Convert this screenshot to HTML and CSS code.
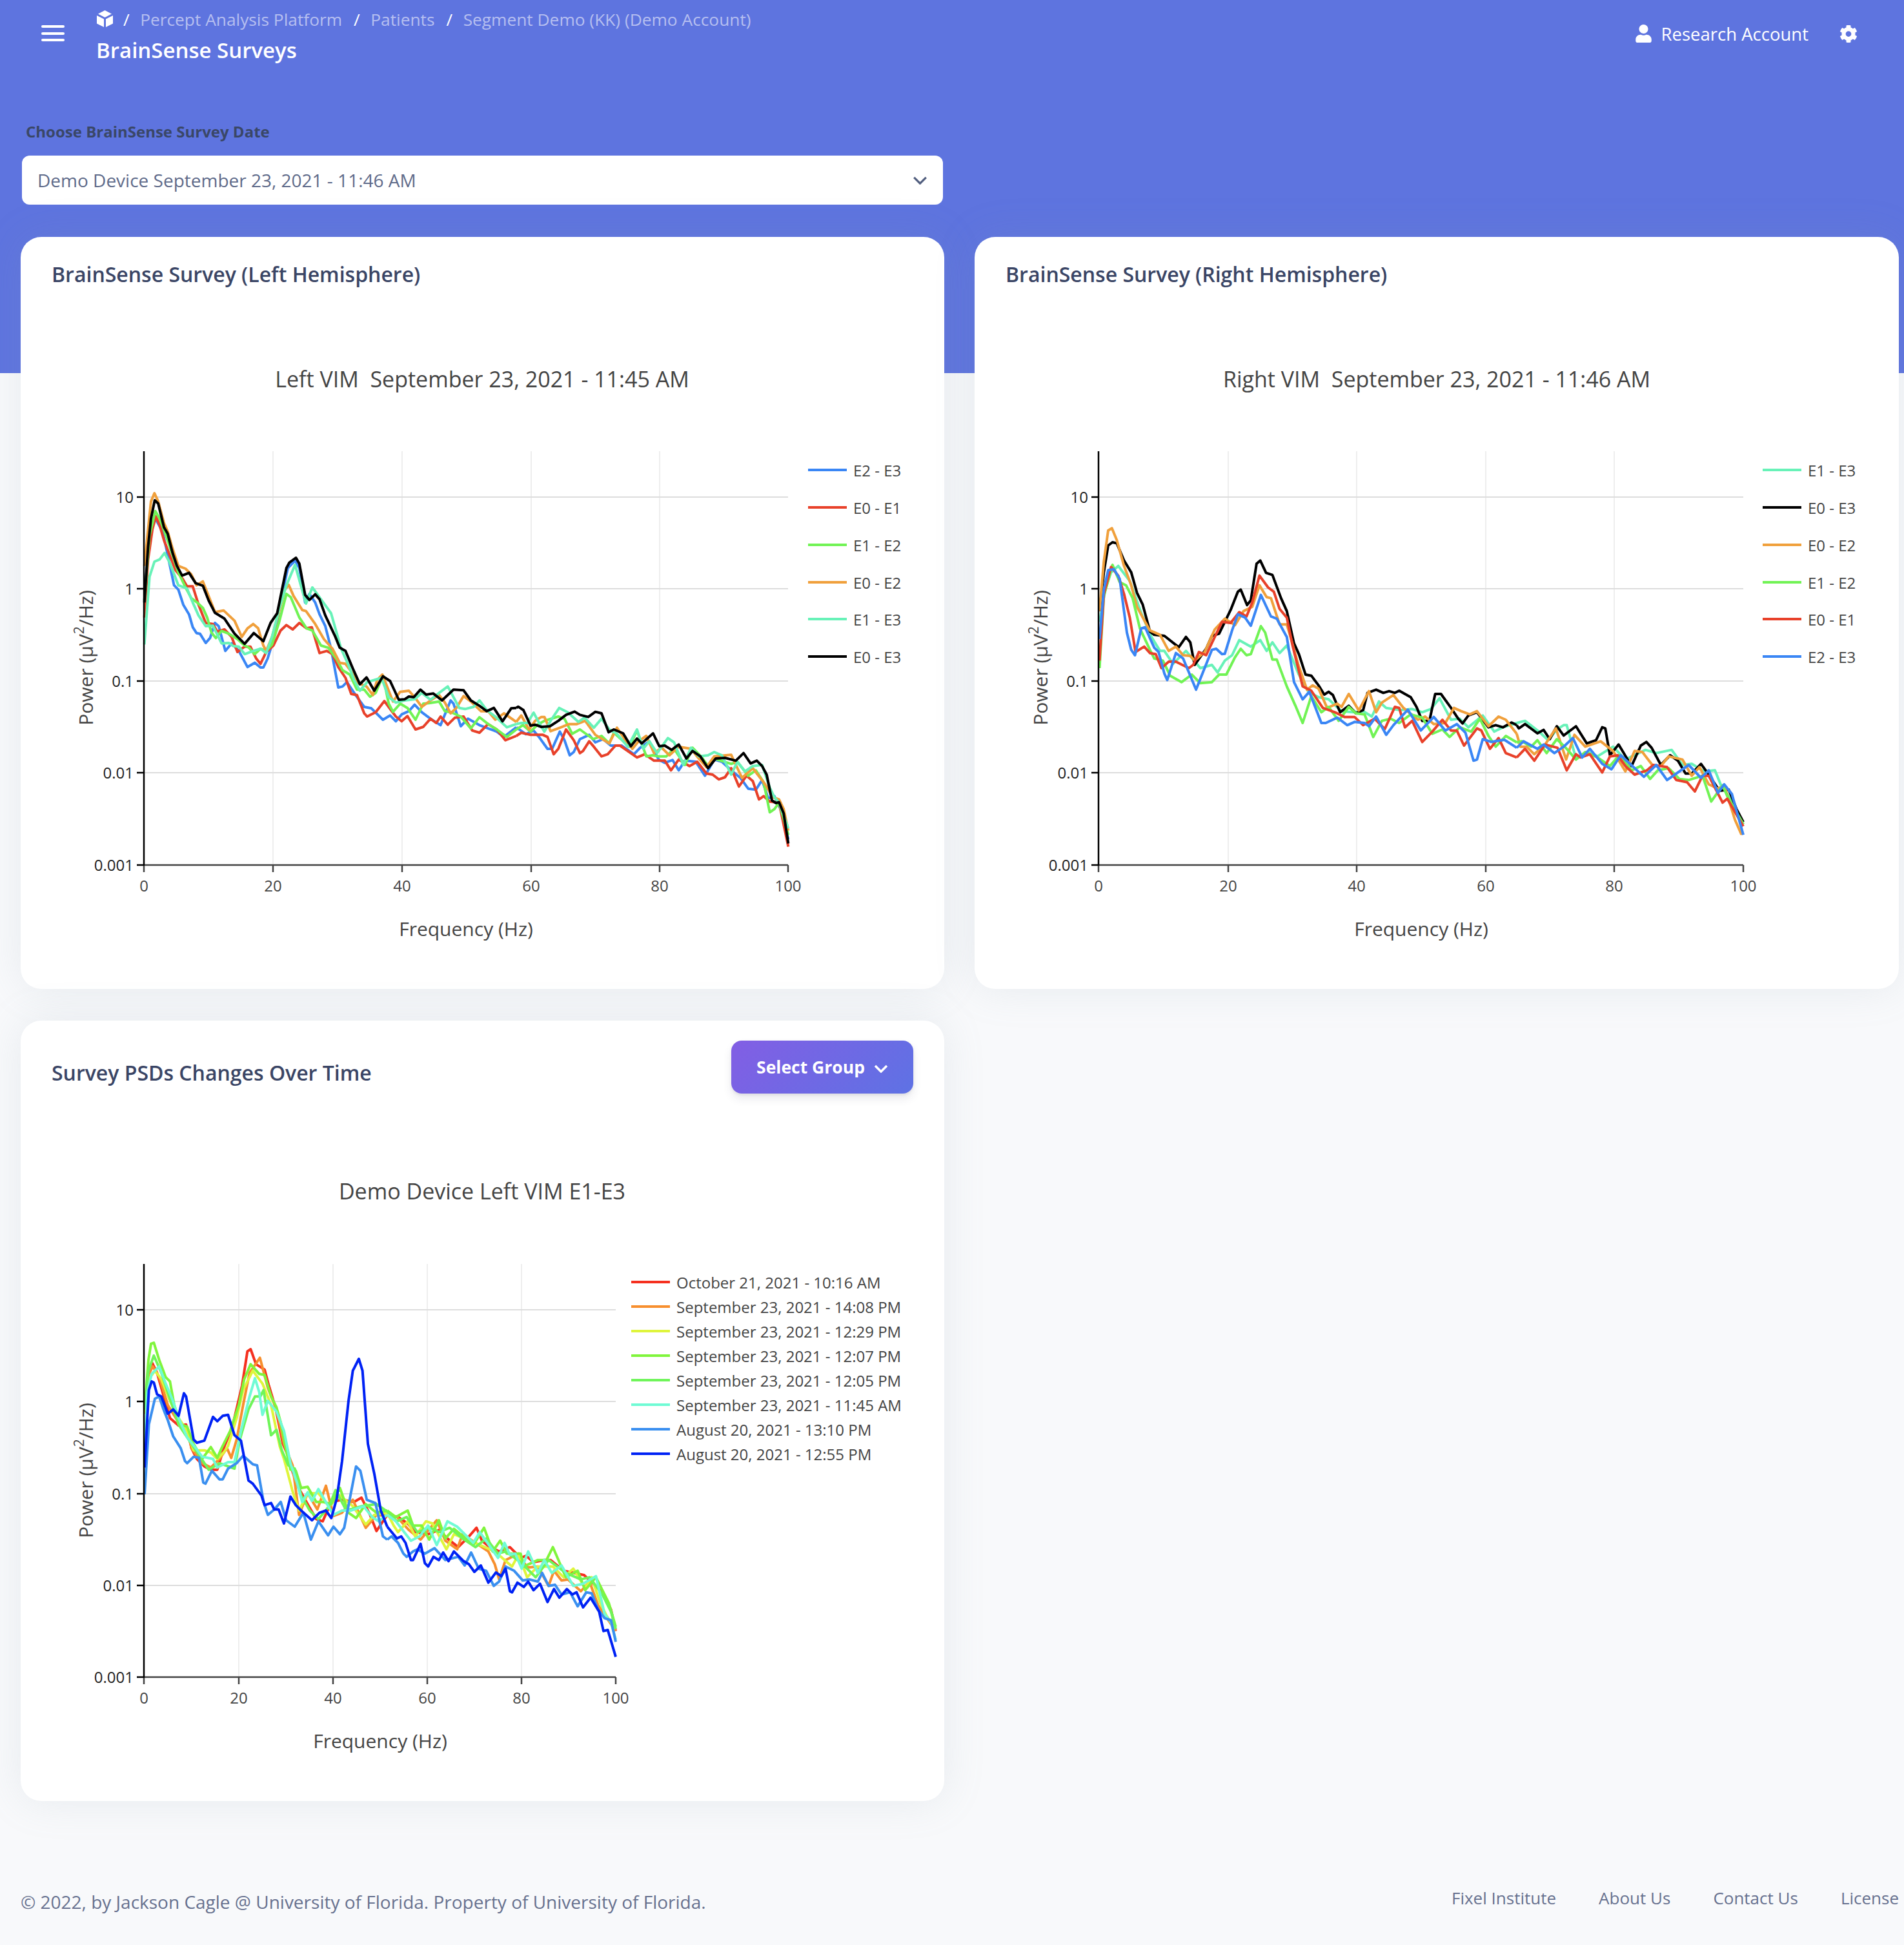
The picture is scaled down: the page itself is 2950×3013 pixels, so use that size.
FILE: index.html
```html
<!DOCTYPE html>
<html lang="en">
<head>
<meta charset="utf-8">
<title>BrainSense Surveys</title>
<link rel="stylesheet" href="styles.css">
</head>
<body>
<div class="page">
  <header class="topbar">
    <div class="menu-toggle"><span></span><span></span><span></span></div>
    <div class="heading">
      <nav class="crumbs">
        <svg class="crumb-icon" viewBox="0 0 25 26"><path d="M12.5 0l10.5 5.5-10.5 5.5L2 5.500z"/><path d="M0 8l11 5.500V26L0 20.500z"/><path d="M25 8l-11 5.500V26l11-5.500z"/></svg>
        <span class="sep">/</span><span>Percept Analysis Platform</span>
        <span class="sep">/</span><span>Patients</span>
        <span class="sep">/</span><span>Segment Demo (KK) (Demo Account)</span>
      </nav>
      <h1 class="page-title">BrainSense Surveys</h1>
    </div>
    <div class="account">
      <svg class="user-icon" viewBox="0 0 448 512"><path d="M224 256c70.700 0 128-57.300 128-128S294.700 0 224 0 96 57.300 96 128s57.300 128 128 128zm89.600 32h-16.700c-22.200 10.200-46.900 16-72.900 16s-50.600-5.800-72.900-16h-16.700C60.200 288 0 348.200 0 422.400V464c0 26.500 21.500 48 48 48h352c26.500 0 48-21.500 48-48v-41.600c0-74.200-60.200-134.400-134.400-134.400z"/></svg>
      <span>Research Account</span>
      <svg class="gear-icon" viewBox="0 0 512 512"><path d="M487.400 315.700l-42.600-24.600c4.300-23.200 4.300-47 0-70.200l42.600-24.600c4.900-2.800 7.100-8.600 5.500-14-11.100-35.600-30-67.800-54.700-94.600-3.800-4.100-10-5.100-14.800-2.300L380.800 110c-17.900-15.400-38.500-27.300-60.800-35.100V25.800c0-5.600-3.900-10.500-9.400-11.700-36.700-8.200-74.300-7.800-109.200 0-5.500 1.200-9.400 6.100-9.400 11.700V75c-22.200 7.900-42.800 19.800-60.800 35.100L88.700 85.500c-4.900-2.800-11-1.900-14.800 2.300-24.700 26.700-43.600 58.900-54.700 94.600-1.700 5.400.6 11.200 5.500 14L67.300 221c-4.300 23.200-4.300 47 0 70.200l-42.600 24.600c-4.900 2.800-7.100 8.600-5.500 14 11.100 35.600 30 67.800 54.700 94.600 3.800 4.100 10 5.100 14.800 2.300l42.600-24.600c17.900 15.400 38.500 27.300 60.800 35.100v49.200c0 5.600 3.900 10.500 9.400 11.700 36.700 8.200 74.300 7.800 109.200 0 5.500-1.200 9.400-6.100 9.400-11.700v-49.200c22.200-7.900 42.800-19.800 60.800-35.100l42.600 24.600c4.900 2.800 11 1.900 14.800-2.300 24.700-26.700 43.600-58.900 54.700-94.600 1.500-5.500-.7-11.300-5.600-14.100zM256 336c-44.100 0-80-35.900-80-80s35.900-80 80-80 80 35.900 80 80-35.900 80-80 80z"/></svg>
    </div>
  </header>

  <main class="content">
    <section class="picker">
      <label class="picker-label">Choose BrainSense Survey Date</label>
      <div class="select">
        <span>Demo Device September 23, 2021 - 11:46 AM</span>
        <svg class="select-chevron" viewBox="0 0 24 14"><path d="M2 2l10 10L22 2"/></svg>
      </div>
    </section>

    <div class="card-grid">
      <article class="card">
        <div class="card-header"><h3 class="card-title">BrainSense Survey (Left Hemisphere)</h3></div>
        <svg class="chart chart-top" viewBox="32 483 1431 1049">
          <text class="plot-title" x="747" y="587">Left VIM  September 23, 2021 - 11:45 AM</text>
          <g class="grid-v"><path d="M423 699V1340M623 699V1340M823 699V1340M1022 699V1340"/></g>
          <g class="grid-h"><path d="M223 770H1221M223 912H1221M223 1055H1221M223 1197H1221"/></g>

          <g class="traces" transform="translate(100 680) scale(.44643 .33333)">
            <polyline class="c-blue" points="277,750 295,440 315,370 340,430 355,520 380,680 395,700 412,770 432,815 445,875 458,902 470,905 490,948 505,925 522,855 535,870 558,985 580,950 605,985 635,1060 660,1040 680,1062 690,1062 705,1020 730,910 755,720 775,600 800,565 815,600 835,760 850,720 870,760 885,815 905,870 925,975 950,1155 965,1150 980,1130 1010,1190 1040,1245 1065,1252 1105,1305 1130,1285 1150,1312 1170,1280 1195,1265 1215,1235 1240,1270 1270,1300 1305,1330 1340,1215 1350,1230 1375,1335 1400,1300 1440,1330 1470,1345 1500,1360 1525,1385 1568,1340"/>
            <polyline class="c-red" points="277,830 290,560 305,420 317,360 330,400 345,470 365,540 385,610 410,650 425,685 445,685 465,770 490,855 515,860 530,895 555,885 580,920 600,990 625,965 645,965 665,1020 680,1045 700,990 725,960 750,890 770,865 792,885 815,855 840,880 858,875 885,995 910,985 930,1000 950,1060 975,1110 995,1185 1015,1190 1040,1275 1050,1290 1080,1270 1110,1218 1130,1255 1150,1290 1170,1312 1190,1288 1218,1350 1245,1338 1270,1300 1290,1320 1305,1290 1330,1328 1355,1295 1385,1290 1415,1355 1440,1365 1470,1325 1500,1350 1530,1400 1568,1380"/>
            <polyline class="c-green" points="277,750 295,450 315,335 330,370 350,440 370,520 395,620 420,690 440,740 460,760 480,785 495,830 510,900 525,925 545,892 570,905 600,930 625,960 640,970 660,1000 680,975 700,985 720,955 745,850 770,720 785,735 815,830 840,880 860,890 890,960 915,970 945,1025 965,1075 990,1095 1015,1165 1040,1165 1060,1198 1080,1180 1105,1100 1125,1230 1140,1268 1165,1230 1190,1250 1218,1305 1245,1230 1265,1228 1300,1220 1320,1265 1345,1272 1375,1290 1410,1345 1440,1293 1470,1325 1500,1350 1535,1385 1568,1350"/>
            <polyline class="c-orange" points="277,590 290,420 300,290 312,252 325,290 345,390 358,430 375,510 395,590 420,603 440,630 458,680 480,662 500,730 522,805 552,797 590,845 615,920 635,880 655,860 672,880 690,960 700,985 720,920 745,800 765,700 778,678 795,730 825,795 838,800 870,860 900,930 930,975 955,1040 975,1045 1000,1090 1020,1135 1048,1150 1070,1190 1085,1120 1103,1095 1125,1170 1140,1220 1165,1175 1195,1170 1215,1200 1240,1245 1270,1215 1300,1190 1320,1225 1340,1275 1360,1250 1385,1195 1410,1220 1445,1265 1470,1265 1495,1305 1525,1275 1568,1315"/>
            <polyline class="c-mint" points="277,955 295,640 312,570 330,560 347,530 365,575 395,680 425,695 445,760 465,820 490,870 515,868 545,950 570,948 585,962 605,965 625,1000 655,985 680,975 700,995 720,920 745,790 770,680 800,585 820,680 838,765 860,690 890,745 925,810 960,975 985,1050 1005,1120 1025,1170 1050,1130 1075,1120 1100,1110 1125,1200 1150,1225 1180,1215 1215,1210 1240,1180 1270,1212 1300,1180 1330,1150 1370,1250 1390,1255 1420,1245 1440,1215 1465,1260 1495,1290 1535,1340 1568,1325"/>
            <polyline class="c-black" points="277,760 290,500 300,370 313,285 325,300 345,410 358,440 375,530 390,590 408,635 432,622 455,670 480,682 500,750 522,808 555,835 590,905 625,952 657,902 690,940 715,855 738,810 770,600 780,575 803,552 815,580 835,725 850,748 870,722 885,745 905,820 940,920 955,970 975,985 1000,1065 1025,1140 1048,1108 1075,1170 1105,1103 1130,1125 1160,1212 1180,1210 1195,1197 1212,1200 1235,1165 1255,1188 1280,1183 1310,1215 1350,1165 1385,1168 1410,1215 1440,1240 1465,1265 1490,1250 1520,1312 1550,1252 1568,1250"/>
          </g>
          <g class="traces" transform="translate(700 900) scale(.47832 .33333)">
            <polyline class="c-blue" points="209,680 240,712 265,695 285,730 310,780 325,780 350,700 365,740 382,810 395,795 415,735 445,715 465,750 490,735 515,765 550,765 590,805 610,775 640,745 670,830 690,845 715,832 735,880 755,835 790,840 820,905 850,830 875,840 905,880 935,915 960,965 985,970 1005,925 1025,1010 1045,1000 1065,1060 1090,1200"/>
            <polyline class="c-red" points="209,720 225,705 255,715 295,715 310,725 330,805 345,780 370,690 395,740 415,800 425,790 445,745 460,770 485,815 505,805 530,765 545,765 600,820 625,805 655,835 690,835 710,880 735,830 770,860 795,840 825,895 845,900 865,922 885,912 905,870 930,955 955,905 975,930 995,1015 1010,1000 1030,1025 1060,1030 1090,1235"/>
            <polyline class="c-green" points="209,690 230,670 255,700 280,665 300,650 345,630 365,640 390,710 415,690 458,735 485,720 510,755 525,705 575,770 600,695 630,815 650,810 670,815 695,815 720,780 755,855 780,775 810,820 830,860 850,825 905,850 925,840 960,905 985,880 1010,935 1030,1075 1045,1060 1060,1030 1090,1180"/>
            <polyline class="c-orange" points="209,655 225,625 250,690 270,650 290,632 300,632 320,698 350,682 380,665 405,665 432,650 465,715 510,755 535,682 560,735 585,780 605,745 630,720 655,800 680,775 705,810 735,770 775,780 800,825 825,865 850,815 905,808 940,915 975,870 1015,945 1040,1005 1060,1015 1075,1060 1090,1160"/>
            <polyline class="c-mint" points="209,665 225,660 245,660 265,612 285,665 300,700 320,650 348,590 375,610 410,655 430,635 460,682 485,640 510,690 535,710 570,770 600,690 620,780 640,745 665,800 700,730 720,750 750,855 775,775 800,815 830,810 850,795 875,810 905,900 925,840 950,885 975,860 1005,855 1030,960 1045,1005 1060,1030 1090,1150"/>
            <polyline class="c-black" points="209,590 215,584 232,600 255,672 270,668 290,678 318,675 345,650 370,622 398,607 415,622 442,632 465,608 485,615 508,703 525,690 555,708 580,768 600,732 615,755 652,708 672,768 690,765 712,785 735,760 760,825 780,790 805,815 830,870 855,825 885,822 920,835 945,800 968,848 988,835 1005,860 1020,900 1037,1020 1050,1032 1060,1028 1075,1080 1090,1220"/>
          </g>

          <g class="axis-x"><path d="M222 1340H1221M223 1340V1351M423 1340V1351M623 1340V1351M823 1340V1351M1022 1340V1351M1221 1340V1351"/></g>
          <g class="axis-y"><path d="M223 699V1341M212 770H223M212 912H223M212 1055H223M212 1197H223M212 1340H223"/></g>
          <g class="tick-y">
            <text x="207" y="770">10</text><text x="207" y="912">1</text><text x="207" y="1055">0.1</text><text x="207" y="1197">0.01</text><text x="207" y="1340">0.001</text>
          </g>
          <g class="tick-x">
            <text x="223" y="1373">0</text><text x="423" y="1373">20</text><text x="623" y="1373">40</text><text x="823" y="1373">60</text><text x="1022" y="1373">80</text><text x="1221" y="1373">100</text>
          </g>
          <text class="axis-title" x="722" y="1438">Frequency (Hz)</text>
          <text class="axis-title" transform="translate(132 1019) rotate(-90)">Power (µV<tspan class="sup" dy="-10">2</tspan><tspan dy="10">/Hz)</tspan></text>
          <g class="legend-lines">
            <path class="c-blue" d="M1252 728H1312"/><path class="c-red" d="M1252 786H1312"/><path class="c-green" d="M1252 844H1312"/><path class="c-orange" d="M1252 902H1312"/><path class="c-mint" d="M1252 959H1312"/><path class="c-black" d="M1252 1017H1312"/>
          </g>
          <g class="legend-text">
            <text x="1322" y="728">E2 - E3</text><text x="1322" y="786">E0 - E1</text><text x="1322" y="844">E1 - E2</text><text x="1322" y="902">E0 - E2</text><text x="1322" y="959">E1 - E3</text><text x="1322" y="1017">E0 - E3</text>
          </g>
        </svg>
      </article>

      <article class="card">
        <div class="card-header"><h3 class="card-title">BrainSense Survey (Right Hemisphere)</h3></div>
        <svg class="chart chart-top" viewBox="1510 483 1432 1049">
          <text class="plot-title" x="2226" y="587">Right VIM  September 23, 2021 - 11:46 AM</text>
          <g class="grid-v"><path d="M1903 699V1340M2102 699V1340M2302 699V1340M2501 699V1340"/></g>
          <g class="grid-h"><path d="M1702 770H2701M1702 912H2701M1702 1055H2701M1702 1197H2701"/></g>

          <g class="traces" transform="translate(1650 680) scale(.44643 .33333)">
            <polyline class="c-mint" points="120,850 140,700 160,620 185,590 225,660 265,810 300,920 330,985 345,985 375,1045 420,985 470,1065 510,1050 530,1085 555,1030 580,1005 605,935 645,965 678,935 700,985 720,945 745,995 770,960 810,1090 845,1175 880,1200 915,1210 960,1265 1000,1270 1035,1265 1065,1290 1090,1220 1115,1250 1165,1260 1205,1255 1240,1270 1270,1255 1300,1205 1340,1305 1370,1300 1400,1340 1450,1285 1490,1360 1520,1340 1568,1320"/>
            <polyline class="c-black" points="120,800 135,620 150,495 165,480 180,485 205,565 230,620 250,715 270,770 295,895 310,910 345,915 395,968 420,920 435,945 450,1050 490,975 510,915 535,905 575,795 600,710 610,700 632,772 645,750 665,580 678,565 698,622 720,632 750,740 770,800 795,950 812,1000 835,1095 855,1100 880,1145 900,1188 915,1175 930,1190 955,1270 985,1240 1010,1275 1035,1260 1050,1180 1080,1165 1105,1180 1125,1172 1145,1180 1160,1170 1200,1200 1220,1245 1240,1310 1265,1310 1285,1185 1305,1185 1340,1250 1365,1300 1380,1322 1400,1285 1430,1270 1470,1340 1495,1330 1520,1340 1550,1318 1568,1330"/>
            <polyline class="c-orange" points="120,800 135,570 150,425 163,415 180,470 205,590 230,680 250,780 270,830 295,890 330,910 360,985 385,965 410,1005 435,1008 450,1030 485,990 520,885 555,835 590,865 620,800 650,780 675,680 700,735 715,740 745,862 770,862 785,930 810,1050 840,1165 860,1145 880,1160 910,1250 945,1230 960,1245 985,1185 1020,1262 1055,1172 1080,1270 1100,1225 1140,1190 1175,1250 1225,1305 1250,1290 1280,1325 1320,1320 1350,1250 1375,1265 1405,1280 1430,1265 1470,1335 1505,1290 1530,1305 1568,1370"/>
            <polyline class="c-green" points="120,1065 135,730 165,585 190,665 212,680 235,740 260,880 295,980 310,1020 340,1030 365,1100 405,1130 440,1095 470,1135 510,1130 535,1095 560,1095 590,1015 610,975 630,1005 645,1000 680,870 695,900 720,1025 735,1025 770,1150 800,1240 825,1320 855,1195 890,1270 915,1245 950,1310 985,1245 1010,1275 1040,1280 1070,1385 1100,1310 1130,1300 1160,1320 1200,1280 1240,1295 1275,1370 1310,1350 1335,1385 1370,1340 1410,1360 1440,1300 1470,1380 1495,1430 1530,1380 1568,1410"/>
            <polyline class="c-red" points="120,1030 135,720 160,595 185,635 205,720 225,830 245,990 275,965 295,995 315,1000 335,1065 360,1035 385,1035 430,1065 445,1050 465,990 490,1005 520,920 545,850 575,855 605,805 630,825 650,760 675,635 705,690 725,710 745,790 770,830 790,960 825,1150 855,1170 895,1250 940,1272 970,1292 1005,1292 1035,1330 1075,1300 1110,1348 1145,1245 1160,1250 1180,1340 1205,1310 1240,1408 1275,1360 1310,1305 1340,1355 1360,1355 1385,1425 1430,1345 1445,1355 1475,1440 1505,1390 1530,1460 1568,1480"/>
            <polyline class="c-blue" points="120,930 135,700 150,610 170,605 190,650 215,900 230,980 243,1005 265,880 278,875 310,970 325,990 345,1090 355,1120 385,995 410,1020 455,1165 510,980 525,975 545,1000 555,998 580,890 600,815 625,830 645,868 680,725 715,825 735,835 770,920 795,1130 825,1210 848,1175 890,1320 905,1320 945,1295 980,1330 1005,1315 1040,1320 1055,1335 1080,1290 1115,1375 1140,1330 1190,1258 1235,1355 1280,1292 1320,1355 1360,1325 1390,1365 1418,1495 1430,1490 1450,1395 1480,1408 1525,1398 1568,1435"/>
          </g>
          <g class="traces" transform="translate(2150 900) scale(.47832 .33333)">
            <polyline class="c-mint" points="418,660 445,650 490,700 520,740 548,690 570,670 580,670 610,825 650,795 680,815 730,770 770,830 835,785 870,800 920,785 955,855 985,850 1025,885 1060,880 1080,950 1100,990 1152,1130"/>
            <polyline class="c-black" points="418,670 425,685 445,665 485,708 505,692 525,735 548,675 570,718 610,675 645,755 675,740 695,680 705,685 720,810 748,760 790,860 820,765 838,748 855,775 885,855 915,810 940,835 965,895 985,895 1015,850 1040,900 1075,975 1105,970 1130,1060 1152,1120"/>
            <polyline class="c-orange" points="418,710 430,770 450,770 475,805 510,760 545,685 578,830 605,715 640,770 690,745 730,790 770,885 800,790 825,795 860,860 885,860 910,815 955,830 985,905 1010,865 1040,945 1070,965 1090,950 1125,1110 1145,1175 1152,1170"/>
            <polyline class="c-green" points="418,750 435,745 465,770 485,740 515,800 548,735 580,780 610,830 640,795 680,820 720,860 750,810 790,880 820,860 850,920 875,880 910,870 945,920 975,925 1020,905 1048,1025 1085,950 1100,1000 1152,1130"/>
            <polyline class="c-red" points="418,820 445,780 475,835 510,760 550,775 580,880 610,805 625,820 655,805 695,890 720,815 745,810 770,860 800,900 840,880 860,855 905,865 935,925 970,935 995,978 1020,905 1040,905 1085,1030 1100,1012 1152,1140"/>
            <polyline class="c-blue" points="418,775 440,745 485,780 505,760 540,800 570,770 600,730 630,820 655,780 695,850 725,875 755,810 785,850 830,910 870,855 905,925 975,855 1015,915 1040,880 1070,985 1090,945 1115,990 1152,1180"/>
          </g>

          <g class="axis-x"><path d="M1701 1340H2701M1702 1340V1351M1903 1340V1351M2102 1340V1351M2302 1340V1351M2501 1340V1351M2701 1340V1351"/></g>
          <g class="axis-y"><path d="M1702 699V1341M1691 770H1702M1691 912H1702M1691 1055H1702M1691 1197H1702M1691 1340H1702"/></g>
          <g class="tick-y">
            <text x="1686" y="770">10</text><text x="1686" y="912">1</text><text x="1686" y="1055">0.1</text><text x="1686" y="1197">0.01</text><text x="1686" y="1340">0.001</text>
          </g>
          <g class="tick-x">
            <text x="1702" y="1373">0</text><text x="1903" y="1373">20</text><text x="2102" y="1373">40</text><text x="2302" y="1373">60</text><text x="2501" y="1373">80</text><text x="2701" y="1373">100</text>
          </g>
          <text class="axis-title" x="2202" y="1438">Frequency (Hz)</text>
          <text class="axis-title" transform="translate(1611 1019) rotate(-90)">Power (µV<tspan class="sup" dy="-10">2</tspan><tspan dy="10">/Hz)</tspan></text>
          <g class="legend-lines">
            <path class="c-mint" d="M2731 728H2791"/><path class="c-black" d="M2731 786H2791"/><path class="c-orange" d="M2731 844H2791"/><path class="c-green" d="M2731 902H2791"/><path class="c-red" d="M2731 959H2791"/><path class="c-blue" d="M2731 1017H2791"/>
          </g>
          <g class="legend-text">
            <text x="2801" y="728">E1 - E3</text><text x="2801" y="786">E0 - E3</text><text x="2801" y="844">E0 - E2</text><text x="2801" y="902">E1 - E2</text><text x="2801" y="959">E0 - E1</text><text x="2801" y="1017">E2 - E3</text>
          </g>
        </svg>
      </article>

      <article class="card">
        <div class="card-header card-header-action">
          <h3 class="card-title card-title-low">Survey PSDs Changes Over Time</h3>
          <button class="group-button">Select Group
            <svg class="button-chevron" viewBox="0 0 22 13"><path d="M2 2l9 9 9-9"/></svg>
          </button>
        </div>
        <svg class="chart chart-bottom" viewBox="32 1725 1431 1065">
          <text class="plot-title" x="747" y="1845">Demo Device Left VIM E1-E3</text>
          <g class="grid-v"><path d="M370 1958V2598M516 1958V2598M662 1958V2598M808 1958V2598"/></g>
          <g class="grid-h"><path d="M223 2029H954M223 2171H954M223 2314H954M223 2456H954"/></g>

          <g class="traces" transform="translate(100 1950) scale(.33333)">
            <polyline class="h-red" points="372,720 390,530 408,485 430,530 450,600 490,740 530,775 565,770 590,880 615,930 650,965 680,980 710,980 740,880 780,780 825,590 850,430 865,420 890,490 930,515 950,590 980,690 1015,860 1045,930 1060,990 1085,1060 1130,1140 1170,1210 1200,1220 1240,1130 1290,1120 1345,1130 1380,1110 1420,1190 1450,1265 1500,1190"/>
            <polyline class="h-orange" points="372,700 390,540 410,500 440,550 480,680 530,760 570,790 590,880 640,950 680,970 720,930 755,880 775,925 800,840 830,680 860,530 908,460 945,600 985,700 1020,860 1060,960 1090,1190 1130,1090 1175,1165 1215,1055 1250,1195 1290,1180 1340,1120 1400,1250 1450,1190 1500,1195"/>
            <polyline class="h-yellow" points="372,720 392,560 420,520 450,560 490,660 530,740 570,800 600,890 650,890 680,900 710,930 740,900 760,870 800,740 830,610 875,520 920,580 960,680 1000,870 1020,930 1060,1080 1090,1170 1130,1090 1180,1090 1230,1150 1280,1100 1340,1150 1400,1235 1440,1190 1500,1180"/>
            <polyline class="h-lime" points="372,700 390,470 402,395 415,390 440,470 470,550 490,570 510,680 540,770 570,780 600,860 640,930 680,875 710,925 730,880 770,800 810,680 835,560 865,490 905,535 930,540 960,640 985,690 1005,760 1030,890 1050,980 1075,985 1100,1065 1130,1060 1170,1130 1200,1130 1240,1140 1280,1065 1320,1180 1355,1205 1400,1140 1450,1180 1500,1170"/>
            <polyline class="h-green" points="372,700 390,520 415,450 450,530 490,650 530,770 570,830 610,890 670,980 720,950 790,975 815,840 855,700 885,640 910,640 925,610 960,820 985,795 1010,890 1040,960 1070,975 1100,1100 1140,1170 1180,1210 1230,1150 1260,1075 1310,1170 1380,1150 1450,1140 1500,1175"/>
            <polyline class="h-mint" points="372,900 385,620 405,535 440,500 470,580 500,650 530,740 570,830 610,880 640,920 690,930 710,970 760,945 790,945 820,800 860,640 885,555 905,620 920,725 945,660 985,710 1020,800 1050,950 1080,1040 1105,1130 1130,1085 1150,1125 1180,1070 1220,1140 1250,1190 1290,1170 1330,1170 1390,1150 1430,1200 1460,1220 1500,1190"/>
            <polyline class="h-blue" points="372,1095 392,770 420,650 440,640 460,700 480,750 505,825 540,880 560,940 570,950 600,920 625,925 645,1040 655,1045 685,985 720,1025 735,1025 760,975 800,950 830,915 875,955 895,960 925,1130 945,1190 975,1165 1005,1130 1030,1215 1070,1245 1110,1180 1145,1305 1180,1220 1225,1285 1250,1245 1280,1280 1300,1250 1355,965 1375,985 1405,1120 1445,1135 1480,1290 1500,1305"/>
            <polyline class="h-navy" points="372,970 392,610 405,570 415,575 430,630 450,640 480,720 505,700 530,730 555,625 565,640 600,840 615,855 650,845 690,735 710,755 735,730 760,725 790,820 820,845 855,1030 875,1045 915,1100 930,1145 960,1135 975,1165 995,1165 1020,1230 1050,1105 1075,1145 1100,1170 1150,1215 1185,1180 1215,1170 1240,1205 1265,1115 1290,940 1320,660 1340,520 1368,465 1385,520 1410,860 1440,1000 1470,1170 1500,1245"/>
          </g>
          <g class="traces" transform="translate(500 2150) scale(.33333)">
            <polyline class="h-red" points="300,590 350,600 395,630 430,670 490,680 540,660 580,700 630,740 680,690 715,650 740,710 770,735 820,760 870,740 920,790 945,780 980,810 1030,800 1060,800 1120,850 1215,870 1300,950 1340,1030 1362,1130"/>
            <polyline class="h-orange" points="300,595 345,600 400,660 455,705 530,615 570,710 625,750 650,680 770,760 800,820 820,890 850,800 910,770 950,835 1000,830 1050,920 1075,850 1110,895 1140,890 1200,945 1240,900 1280,1010 1362,1130"/>
            <polyline class="h-yellow" points="300,580 330,640 350,670 395,620 430,690 480,620 510,630 575,750 610,680 660,700 730,730 800,760 880,830 910,775 950,880 1000,830 1070,830 1120,880 1165,840 1220,930 1250,880 1290,1000 1320,1060 1362,1120"/>
            <polyline class="h-lime" points="300,570 340,600 395,570 420,640 460,640 495,705 540,615 570,700 610,655 700,730 750,650 790,760 825,710 855,770 920,770 935,830 1000,800 1040,800 1070,740 1100,810 1130,880 1185,850 1220,940 1270,880 1330,1000 1362,1110"/>
            <polyline class="h-green" points="300,575 345,620 390,600 440,670 500,650 540,670 590,650 650,700 710,740 760,700 815,770 850,760 920,810 990,880 1050,800 1130,860 1200,890 1240,880 1300,960 1340,1040 1362,1120"/>
            <polyline class="h-mint" points="300,590 340,620 410,710 450,690 490,640 530,730 580,620 625,645 700,720 730,670 815,790 845,720 870,775 895,770 925,840 955,760 1000,860 1030,800 1065,860 1110,825 1165,920 1210,910 1270,875 1310,1050 1340,1090 1362,1170"/>
            <polyline class="h-blue" points="300,705 320,690 350,720 375,770 390,785 420,760 440,750 475,770 520,745 570,800 630,785 660,825 690,765 725,840 760,850 795,920 820,900 850,830 890,850 930,895 960,890 1000,900 1020,860 1050,920 1080,915 1110,960 1150,950 1185,1015 1225,950 1250,955 1280,1030 1310,1070 1340,1080 1362,1180"/>
            <polyline class="h-navy" points="300,645 345,700 365,690 385,720 410,800 420,800 455,725 475,815 490,830 515,785 540,800 560,765 585,805 610,760 655,805 680,820 705,855 735,825 770,905 805,858 830,875 850,840 870,945 880,950 905,905 935,925 955,900 980,940 1010,910 1045,995 1075,935 1100,975 1135,935 1160,960 1180,950 1210,1020 1245,975 1285,1040 1305,1130 1325,1125 1362,1250"/>
          </g>

          <g class="axis-x"><path d="M222 2598H954M223 2598V2609M370 2598V2609M516 2598V2609M662 2598V2609M808 2598V2609M954 2598V2609"/></g>
          <g class="axis-y"><path d="M223 1958V2599M212 2029H223M212 2171H223M212 2314H223M212 2456H223M212 2598H223"/></g>
          <g class="tick-y">
            <text x="207" y="2029">10</text><text x="207" y="2171">1</text><text x="207" y="2314">0.1</text><text x="207" y="2456">0.01</text><text x="207" y="2598">0.001</text>
          </g>
          <g class="tick-x">
            <text x="223" y="2631">0</text><text x="370" y="2631">20</text><text x="516" y="2631">40</text><text x="662" y="2631">60</text><text x="808" y="2631">80</text><text x="954" y="2631">100</text>
          </g>
          <text class="axis-title" x="589" y="2696">Frequency (Hz)</text>
          <text class="axis-title" transform="translate(132 2278) rotate(-90)">Power (µV<tspan class="sup" dy="-10">2</tspan><tspan dy="10">/Hz)</tspan></text>
          <g class="legend-lines">
            <path class="h-red" d="M978 1986H1038"/><path class="h-orange" d="M978 2024H1038"/><path class="h-yellow" d="M978 2062H1038"/><path class="h-lime" d="M978 2100H1038"/><path class="h-green" d="M978 2138H1038"/><path class="h-mint" d="M978 2176H1038"/><path class="h-blue" d="M978 2214H1038"/><path class="h-navy" d="M978 2252H1038"/>
          </g>
          <g class="legend-text">
            <text x="1048" y="1986">October 21, 2021 - 10:16 AM</text><text x="1048" y="2024">September 23, 2021 - 14:08 PM</text><text x="1048" y="2062">September 23, 2021 - 12:29 PM</text><text x="1048" y="2100">September 23, 2021 - 12:07 PM</text><text x="1048" y="2138">September 23, 2021 - 12:05 PM</text><text x="1048" y="2176">September 23, 2021 - 11:45 AM</text><text x="1048" y="2214">August 20, 2021 - 13:10 PM</text><text x="1048" y="2252">August 20, 2021 - 12:55 PM</text>
          </g>
        </svg>
      </article>
    </div>
  </main>

  <footer class="footer">
    <p class="copyright">© 2022, by Jackson Cagle @ University of Florida. Property of University of Florida.</p>
    <nav class="footer-links">
      <a>Fixel Institute</a><a>About Us</a><a>Contact Us</a><a>License</a>
    </nav>
  </footer>
</div>
</body>
</html>
```

FILE: styles.css
```css
* { box-sizing: border-box; }
html, body { margin: 0; padding: 0; }
body {
  font-family: "Open Sans", sans-serif;
  color: #5f6b8a;
  background: #f8f9fb;
}
.page {
  width: 2950px;
  height: 3013px;
  overflow: hidden;
  background: linear-gradient(#5e74df 578px, #f8f9fb 578px);
}

/* top bar */
.topbar {
  display: flex;
  align-items: flex-start;
  height: 164px;
  padding: 10px 72px 0 64px;
}
.menu-toggle {
  display: flex;
  flex-direction: column;
  gap: 6.500px;
  width: 36px;
  margin-top: 29px;
  margin-right: 50px;
}
.menu-toggle span {
  display: block;
  height: 4px;
  border-radius: 2px;
  background: #fff;
}
.heading { flex: 1; }
.crumbs {
  display: flex;
  align-items: center;
  height: 40px;
  font-size: 26.300px;
  color: #b6bff0;
}
.crumb-icon { width: 25px; height: 26px; fill: #fff; margin-right: 16px; margin-top: -2px; }
.sep { color: #fff; margin-right: 16.500px; }
.crumbs span:not(.sep) { margin-right: 18px; }
.page-title {
  margin: 6px 0 0 -1px;
  font-size: 33px;
  line-height: 44px;
  font-weight: 600;
  color: #fff;
}
.account {
  display: flex;
  align-items: center;
  height: 56px;
  margin-top: 14px;
  font-size: 27.500px;
  color: #fff;
}
.user-icon { width: 25px; height: 28px; fill: #fff; margin-right: 15px; }
.gear-icon { width: 28px; height: 29px; fill: #fff; margin-left: 48px; }

/* date picker */
.content { padding: 0 8px 0 32px; }
.picker { width: 1431px; margin-bottom: 50px; }
.picker-label {
  display: block;
  padding-left: 8px;
  height: 77px;
  font-size: 24px;
  line-height: 80px;
  font-weight: 700;
  color: #3a4767;
}
.select {
  display: flex;
  align-items: center;
  justify-content: space-between;
  height: 76px;
  margin: 0 2px;
  padding: 0 24px;
  border-radius: 12px;
  background: #fff;
  font-size: 28px;
}
.select-chevron { width: 23px; height: 13px; fill: none; stroke: #525f7f; stroke-width: 3.500; }

/* cards */
.card-grid {
  display: grid;
  grid-template-columns: 1431px 1432px;
  column-gap: 47px;
  row-gap: 49px;
}
.card {
  border-radius: 32px;
  background: #fff;
  box-shadow: 0 0 64px rgba(136, 152, 170, .15);
}
.card-header { display: flex; align-items: center; justify-content: space-between; padding: 40px 48px; }
.card-header-action { padding: 31px 48px; }
.card-title {
  margin: 0;
  font-size: 32px;
  line-height: 36px;
  font-weight: 600;
  color: #3a4565;
}
.card-title-low { padding-top: 18px; line-height: 36px; }
.group-button {
  display: flex;
  align-items: center;
  justify-content: center;
  gap: 14px;
  width: 282px;
  height: 82px;
  border: 0;
  border-radius: 16px;
  background: linear-gradient(135deg, #825ee4, #5e72e4);
  box-shadow: 0 8px 14px rgba(50, 50, 93, .1), 0 2px 4px rgba(0, 0, 0, .08);
  font-family: inherit;
  font-size: 26.500px;
  font-weight: 700;
  color: #fff;
}
.button-chevron { width: 22px; height: 13px; margin-top: 4px; fill: none; stroke: #fff; stroke-width: 3.500; }

/* plotly-like charts */
.chart { display: block; width: 100%; font-family: "Open Sans", sans-serif; }
.chart-top { height: 1049px; }
.chart-bottom { height: 1065px; }
.plot-title { font-size: 34px; fill: #444; text-anchor: middle; dominant-baseline: central; white-space: pre; }
.grid-v path { stroke: #eee; stroke-width: 2; fill: none; }
.grid-h path { stroke: #ddd; stroke-width: 2; fill: none; }
.axis-x path { stroke: #444; stroke-width: 2.500; fill: none; }
.axis-y path { stroke: #000; stroke-width: 2.500; fill: none; }
.tick-x text { font-size: 24px; fill: #444; text-anchor: middle; dominant-baseline: central; transform: translateY(-2px); }
.tick-y text { font-size: 24px; fill: #222; text-anchor: end; dominant-baseline: central; transform: translateY(-1px); }
.axis-title { font-size: 30px; fill: #444; text-anchor: middle; dominant-baseline: central; }
.sup { font-size: 21px; }
.legend-text text { font-size: 24px; fill: #444; dominant-baseline: central; }
.legend-lines path { fill: none; stroke-width: 4; }
.traces polyline {
  fill: none;
  stroke-width: 4;
  stroke-linejoin: round;
  vector-effect: non-scaling-stroke;
}
.c-blue { stroke: #3a86f5; }
.c-red { stroke: #e8412a; }
.c-green { stroke: #71f355; }
.c-orange { stroke: #f0a03c; }
.c-mint { stroke: #68f2b8; }
.c-black { stroke: #000; }
.h-red { stroke: #f5301f; }
.h-orange { stroke: #f78f2e; }
.h-yellow { stroke: #dff53c; }
.h-lime { stroke: #80f53c; }
.h-green { stroke: #6ff55a; }
.h-mint { stroke: #70fbd5; }
.h-blue { stroke: #3a8ff0; }
.h-navy { stroke: #0022f5; }

/* footer */
.footer {
  display: flex;
  justify-content: space-between;
  align-items: flex-start;
  padding: 131px 8px 0 32px;
  font-size: 28px;
  color: #67718f;
}
.copyright { margin: 6px 0 0; line-height: 38px; }
.footer-links { display: flex; gap: 66px; line-height: 38px; font-size: 26px; }
```
